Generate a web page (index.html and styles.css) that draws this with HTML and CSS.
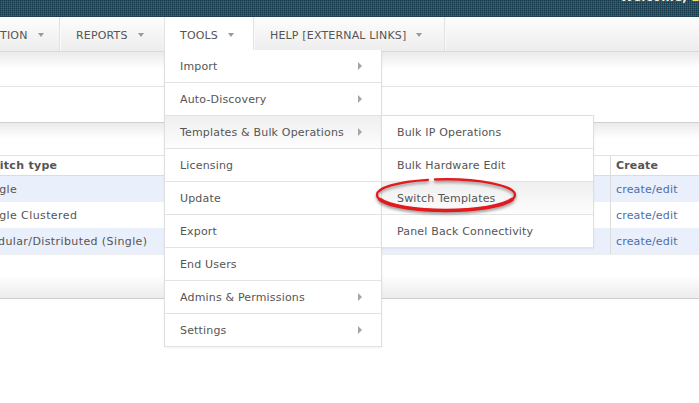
FILE: index.html
```html
<!DOCTYPE html>
<html>
<head>
<meta charset="utf-8">
<link rel="stylesheet" href="styles.css">
</head>
<body>
<div class="topbar"><span class="welcome">Welcome, <span class="name">Edward</span></span></div>
<nav class="nav">
  <div class="nav-item first">TION<span class="caret"></span></div>
  <div class="nav-item reports">REPORTS<span class="caret"></span></div>
  <div class="nav-item tools active">TOOLS<span class="caret"></span>
    <ul class="menu">
      <li class="has-sub">Import</li>
      <li class="has-sub">Auto-Discovery</li>
      <li class="has-sub hover">Templates &amp; Bulk Operations
        <ul class="submenu">
          <li>Bulk IP Operations</li>
          <li>Bulk Hardware Edit</li>
          <li class="hover">Switch Templates</li>
          <li>Panel Back Connectivity</li>
        </ul>
      </li>
      <li>Licensing</li>
      <li>Update</li>
      <li>Export</li>
      <li>End Users</li>
      <li class="has-sub">Admins &amp; Permissions</li>
      <li class="has-sub">Settings</li>
    </ul>
  </div>
  <div class="nav-item help">HELP [EXTERNAL LINKS]<span class="caret"></span></div>
</nav>
<div class="band band1"></div>
<div class="band band2"></div>
<div class="band band3"></div>
<div class="grid">
  <div class="row head"><div class="cell type">Switch type</div><div class="cell create">Create</div></div>
  <div class="row alt"><div class="cell type">Single</div><div class="cell create"><a>create/edit</a></div></div>
  <div class="row"><div class="cell type">Single Clustered</div><div class="cell create"><a>create/edit</a></div></div>
  <div class="row alt"><div class="cell type">Modular/Distributed (Single)</div><div class="cell create"><a>create/edit</a></div></div>
</div>
<div class="band footer"></div>
<svg class="circle" width="160" height="50" viewBox="0 0 160 50">
  <path class="ring" d="M 65 6.5 A 69 15.5 0 0 1 145 22 A 69 15.5 0 0 1 7 22 A 69 15.5 0 0 1 58 6.8" />
  <path class="ring thick" d="M 10 26.5 A 69 15.5 0 0 0 142 26.5" />
</svg>
</body>
</html>
```
FILE: styles.css
```css
* { box-sizing: border-box; }
html, body { margin: 0; padding: 0; }
body {
  font-family: "DejaVu Sans", Verdana, sans-serif;
  font-size: 11px;
  letter-spacing: .17px;
  color: #555;
  background: #fff;
  overflow: hidden;
  width: 699px;
  height: 403px;
  position: relative;
}
.topbar {
  height: 17px;
  background-color: #336a85;
  background-image:
    linear-gradient(90deg, rgba(10, 40, 55, .45) 1px, transparent 1px),
    linear-gradient(rgba(10, 40, 55, .45) 1px, transparent 1px);
  background-size: 2px 2px;
  overflow: hidden;
  padding-left: 620px;
  white-space: nowrap;
}
.welcome {
  display: block;
  font-size: 12px;
  font-weight: bold;
  line-height: 12px;
  margin-top: -9px;
  color: #f4f1e0;
}
.name { color: #f3d977; }
.nav {
  display: flex;
  height: 35px;
  background: linear-gradient(#fdfdfd, #ededed);
  border-bottom: 1px solid #dadada;
}
.nav-item {
  position: relative;
  display: flex;
  align-items: center;
  height: 34px;
  padding: 2px 0 0 16px;
  border-right: 1px solid #e2e2e2;
  box-shadow: 1px 0 0 #fafafa;
  white-space: nowrap;
  color: #555;
}
.nav-item.first {
  width: 60px;
  padding-left: 0;
}
.nav-item.reports { width: 105px; }
.nav-item.tools { width: 89px; padding-left: 15px; }
.nav-item.help { width: 191px; }
.nav-item.active {
  background: #fff;
  height: 35px;
  margin-bottom: -1px;
  padding-bottom: 1px;
  z-index: 5;
}
.caret {
  display: inline-block;
  width: 0;
  height: 0;
  margin-left: 10px;
  border-top: 4px solid #9a9a9a;
  border-left: 3.5px solid transparent;
  border-right: 3.5px solid transparent;
}
.menu, .submenu {
  list-style: none;
  margin: 0;
  padding: 0;
  position: absolute;
  background: #fff;
}
.menu {
  left: -1px;
  top: 33px;
  width: 218px;
  border-left: 1px solid #dedede;
  border-right: 1px solid #dedede;
  box-shadow: 0 1px 2px rgba(0, 0, 0, .06);
}
.menu > li, .submenu > li {
  position: relative;
  height: 33px;
  line-height: 33px;
  padding-left: 15px;
  border-bottom: 1px solid #e3e3e3;
  color: #555;
  white-space: nowrap;
}
.hover {
  background: linear-gradient(#efefef, #fdfdfd);
}
.menu > li.has-sub::after {
  content: "";
  position: absolute;
  right: 19px;
  top: 12px;
  border-left: 4px solid #a5a5a5;
  border-top: 4px solid transparent;
  border-bottom: 4px solid transparent;
}
.submenu {
  left: 216px;
  top: -1px;
  width: 213px;
  border: 1px solid #dedede;
  border-bottom: none;
  box-shadow: 0 1px 2px rgba(0, 0, 0, .06);
}
.band { width: 100%; }
.band1 {
  height: 35px;
  background: linear-gradient(#ebebeb, #fff 17px);
  border-bottom: 1px solid #e4e4e4;
}
.band2 {
  height: 36px;
  border-bottom: 1px solid #cfcfcf;
}
.band3 {
  height: 33px;
  background: linear-gradient(#ebebeb, #fff 16px);
  border-bottom: 1px solid #e2e2e2;
}
.grid { margin-left: -19px; letter-spacing: .4px; }
.row {
  display: flex;
  height: 26px;
  align-items: stretch;
}
.row.head {
  height: 20px;
  border-bottom: 1px solid #dcdcdc;
  font-weight: bold;
  letter-spacing: .3px;
}
.row.alt { background: #e9effb; }
.cell {
  display: flex;
  align-items: center;
  white-space: nowrap;
}
.cell.type { flex: 1; }
.cell.create {
  width: 89px;
  border-left: 1px solid #dcdcdc;
  padding-left: 5px;
  letter-spacing: .17px;
}
.cell a { color: #4c6ea8; }
.footer {
  height: 45px;
  background: linear-gradient(#fff 20px, #ececec);
  border-bottom: 1px solid #cdcdcd;
  border-top: 1px solid #eeeeee;
}
.circle {
  position: absolute;
  left: 370px;
  top: 173px;
  z-index: 20;
  overflow: visible;
  filter: drop-shadow(0 2px 1.5px rgba(0, 0, 0, .4));
}
.ring {
  fill: none;
  stroke: #e3191c;
  stroke-width: 2.3;
  stroke-linecap: round;
}
.ring.thick { stroke-width: 3.6; }
```
